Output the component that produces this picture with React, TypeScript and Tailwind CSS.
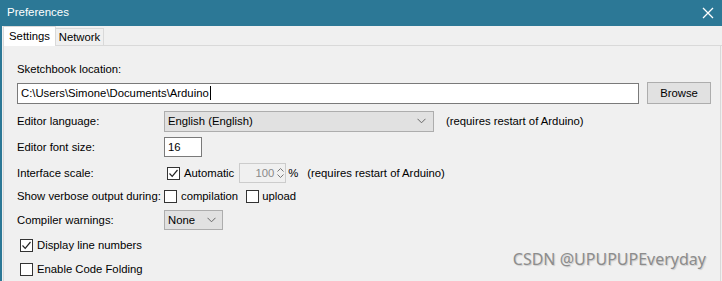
import React from "react";

const font = { fontFamily: '"Liberation Sans", Arial, sans-serif' };

function Check({ checked }: { checked?: boolean }) {
  return (
    <span className="inline-flex h-[13px] w-[13px] shrink-0 items-center justify-center border border-[#333] bg-white">
      {checked && (
        <svg width="11" height="11" viewBox="0 0 11 11">
          <path d="M1.5 5.5 L4.2 8.3 L9.5 2" fill="none" stroke="#222" strokeWidth="1.2" />
        </svg>
      )}
    </span>
  );
}

function Chevron() {
  return (
    <svg width="9" height="6" viewBox="0 0 9 6">
      <path d="M0.5 0.8 L4.5 4.8 L8.5 0.8" fill="none" stroke="#666" strokeWidth="1" />
    </svg>
  );
}

export default function App() {
  return (
    <div className="flex h-[281px] w-[722px] flex-col overflow-hidden whitespace-nowrap bg-[#2c7896] text-[11.3px] text-black" style={font}>
      <div className="flex h-[26px] shrink-0 items-center justify-between pl-[7px] pr-[6px]">
        <span className="text-[11.5px] text-white">Preferences</span>
        <svg width="12" height="12" viewBox="0 0 12 12" className="mr-[2px]">
          <path d="M1 1 L11 11 M11 1 L1 11" stroke="white" strokeWidth="1.3" />
        </svg>
      </div>
      <div className="ml-[2px] flex flex-1 flex-col bg-[#f0f0f0] pl-[1px]">
        <div className="flex h-[20px] shrink-0 items-end border-b border-[#d9d9d9]">
          <div className="-mb-px flex h-[20px] w-[53px] shrink-0 items-center justify-center border border-b-0 border-[#d9d9d9] bg-white">Settings</div>
          <div className="flex h-[17px] w-[48px] shrink-0 items-center justify-center border border-b-0 border-l-0 border-[#d9d9d9] bg-[#f0f0f0]">Network</div>
        </div>
        <div className="relative mr-[1px] flex flex-1 flex-col border-x border-[#d9d9d9] bg-[#f0f0f0] pl-[13px] pt-[15px]">
          <div className="h-[16px] leading-[16px]">Sketchbook location:</div>
          <div className="mt-[5px] flex items-center">
            <div className="flex h-[21px] w-[622px] items-center border border-[#7a7a7a] bg-white pl-[3px]">
              C:\Users\Simone\Documents\Arduino<span className="ml-px h-[14px] w-px bg-black" />
            </div>
            <div className="ml-[8px] flex h-[22px] w-[64px] items-center justify-center border border-[#adadad] bg-[#e1e1e1]">Browse</div>
          </div>
          <div className="mt-[7px] flex h-[20px] items-center">
            <span className="w-[147px] shrink-0">Editor language:</span>
            <div className="flex h-[21px] w-[270px] items-center justify-between border border-[#adadad] bg-[#e1e1e1] pl-[3px] pr-[7px]">
              <span>English (English)</span>
              <Chevron />
            </div>
            <span className="ml-[12px]">(requires restart of Arduino)</span>
          </div>
          <div className="mt-[6px] flex h-[20px] items-center">
            <span className="w-[147px] shrink-0">Editor font size:</span>
            <div className="flex h-[20px] w-[38px] items-center border border-[#7a7a7a] bg-white pl-[3px]">16</div>
          </div>
          <div className="mt-[6px] flex h-[20px] items-center">
            <span className="w-[150px] shrink-0">Interface scale:</span>
            <Check checked />
            <span className="ml-[4px]">Automatic</span>
            <div className="ml-[5px] flex h-[20px] w-[47px] items-center justify-end border border-[#cccccc] bg-[#f0f0f0] pr-[1px] text-[#8a8a8a]">
              <span>100</span>
              <div className="ml-[3px] flex flex-col items-center gap-[2px]">
                <svg width="7" height="4" viewBox="0 0 7 4"><path d="M0.5 3.5 L3.5 0.5 L6.5 3.5" fill="none" stroke="#777" /></svg>
                <svg width="7" height="4" viewBox="0 0 7 4"><path d="M0.5 0.5 L3.5 3.5 L6.5 0.5" fill="none" stroke="#777" /></svg>
              </div>
            </div>
            <span className="ml-[2px]">%</span>
            <span className="ml-[9px]">(requires restart of Arduino)</span>
          </div>
          <div className="mt-[3px] flex h-[20px] items-center">
            <span className="w-[147px] shrink-0">Show verbose output during:</span>
            <Check />
            <span className="ml-[4px]">compilation</span>
            <span className="ml-[8px] flex"><Check /></span>
            <span className="ml-[3px]">upload</span>
          </div>
          <div className="mt-[4px] flex h-[20px] items-center">
            <span className="w-[147px] shrink-0">Compiler warnings:</span>
            <div className="flex h-[20px] w-[59px] items-center justify-between border border-[#adadad] bg-[#e1e1e1] pl-[3px] pr-[6px]">
              <span>None</span>
              <Chevron />
            </div>
          </div>
          <div className="mt-[5px] flex h-[20px] items-center pl-[3px]">
            <Check checked />
            <span className="ml-[4px]">Display line numbers</span>
          </div>
          <div className="mt-[4px] flex h-[20px] items-center pl-[3px]">
            <Check />
            <span className="ml-[4px]">Enable Code Folding</span>
          </div>
          <div className="absolute bottom-[10px] right-[14px] text-[16px] text-[#8c8c8c] [text-shadow:1px_1px_1px_rgba(0,0,0,0.15)]" style={{ fontFamily: '"Noto Sans", sans-serif' }}>
            CSDN @UPUPUPEveryday
          </div>
        </div>
      </div>
    </div>
  );
}
